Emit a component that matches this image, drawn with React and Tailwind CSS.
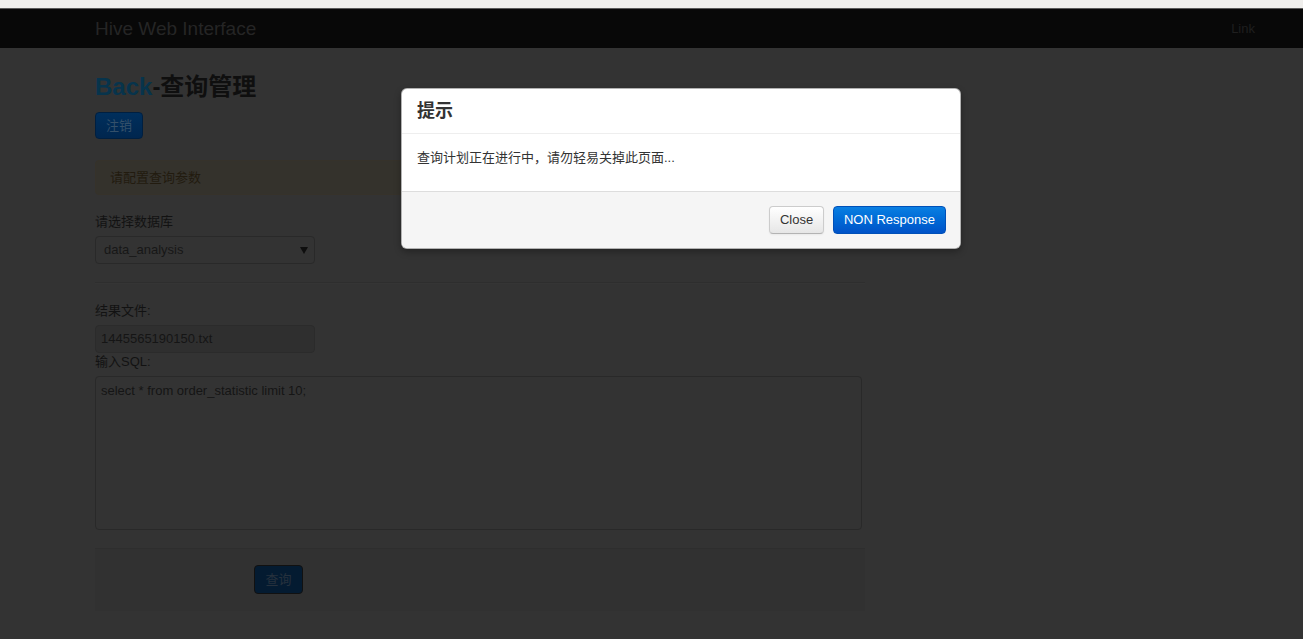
import React from 'react';

const font = "font-['Liberation_Sans','Noto_Sans_CJK_SC',sans-serif]";

const Field = ({ label, children }) => (
    <div>
        <div className="text-[13px] leading-[18px] mb-[5px] text-[#121212]">{label}</div>
        {children}
    </div>
);

const App = () => {
    return (
        <div className={`${font} relative w-[1303px] h-[639px] overflow-hidden bg-[#333333]`}>
            {/* browser chrome strip */}
            <div className="h-[9px] bg-[#efeeec] border-b border-[#5a5a5a]"></div>

            {/* navbar */}
            <div className="h-[39px] bg-[#080808] flex items-center justify-between pl-[95px] pr-[48px]">
                <span className="text-[19px] text-[#252525] leading-none">Hive Web Interface</span>
                <span className="text-[13px] text-[#1f1f1f]">Link</span>
            </div>

            {/* page content, dimmed by the backdrop */}
            <div className="pl-[95px] w-[865px]">
                <h3 className="mt-[19px] text-[24px] leading-[40px] font-bold text-[#0f0f0f]">
                    <span className="text-[#07344c]">Back</span>-查询管理
                </h3>

                <button className="mt-[5px] h-[27px] w-[48px] rounded-[4px] bg-gradient-to-b from-[#002f5c] to-[#00264f] border border-[#001f40] text-[13px] text-[#34506a] flex items-center justify-center">
                    注销
                </button>

                <div className="mt-[21px] h-[35px] rounded-[4px] bg-[#34322c] border border-[#36322a] pl-[14px] flex items-center text-[13px] text-[#221b0f]">
                    请配置查询参数
                </div>

                <div className="mt-[18px]">
                    <Field label="请选择数据库">
                        <div className="w-[220px] h-[28px] rounded-[4px] border border-[#292929] bg-[#333333] flex items-center justify-between pl-[8px] pr-[6px] text-[13px] text-[#171717]">
                            <span>data_analysis</span>
                            <svg width="8" height="7" viewBox="0 0 8 7"><path d="M0 0h8L4 7z" fill="#0e0e0e" /></svg>
                        </div>
                    </Field>
                </div>

                <div className="mt-[18px] border-t border-[#2e2e2e] border-b border-b-[#353535] h-[2px]"></div>

                <div className="mt-[18px]">
                    <Field label="结果文件:">
                        <div className="w-[220px] h-[28px] rounded-[4px] border border-[#2b2b2b] bg-[#2f2f2f] flex items-center pl-[5px] text-[13px] text-[#151515]">
                            1445565190150.txt
                        </div>
                    </Field>
                    <Field label="输入SQL:">
                        <div className="w-[767px] h-[154px] rounded-[4px] border border-[#292929] bg-[#333333] px-[5px] pt-[4px] text-[13px] leading-[20px] text-[#151515]">
                            select * from order_statistic limit 10;
                        </div>
                    </Field>
                </div>

                <div className="mt-[18px] h-[63px] bg-[#313131] border-t border-[#2e2e2e] pl-[159px] pt-[16px]">
                    <button className="h-[29px] w-[49px] rounded-[4px] bg-[#041b31] border border-[#111111] text-[13px] text-[#26313d] flex items-center justify-center">
                        查询
                    </button>
                </div>
            </div>

            {/* modal */}
            <div className="absolute left-[401px] top-[88px] w-[560px] rounded-[6px] bg-white border border-black/30 shadow-[0_3px_7px_rgba(0,0,0,0.3)] overflow-hidden">
                <div className="h-[45px] border-b border-[#eeeeee] px-[15px] flex items-center">
                    <span className="text-[18px] font-bold text-[#333333]">提示</span>
                </div>
                <div className="h-[57px] px-[15px] pt-[14px] text-[13px] leading-[20px] text-[#333333]">
                    查询计划正在进行中，请勿轻易关掉此页面...
                </div>
                <div className="h-[57px] bg-[#f5f5f5] border-t border-[#dddddd] flex items-center justify-end gap-[9px] pr-[14px]">
                    <button className="h-[28px] w-[55px] rounded-[4px] border border-[#cccccc] border-b-[#b3b3b3] bg-gradient-to-b from-white to-[#e6e6e6] text-[13px] text-[#333333] shadow-[inset_0_1px_0_rgba(255,255,255,0.2),0_1px_2px_rgba(0,0,0,0.05)]">
                        Close
                    </button>
                    <button className="h-[28px] w-[113px] rounded-[4px] border border-[#0050b8] bg-gradient-to-b from-[#0a7fe2] to-[#0052c8] text-[13px] text-white">
                        NON Response
                    </button>
                </div>
            </div>
        </div>
    );
};

export default App;
